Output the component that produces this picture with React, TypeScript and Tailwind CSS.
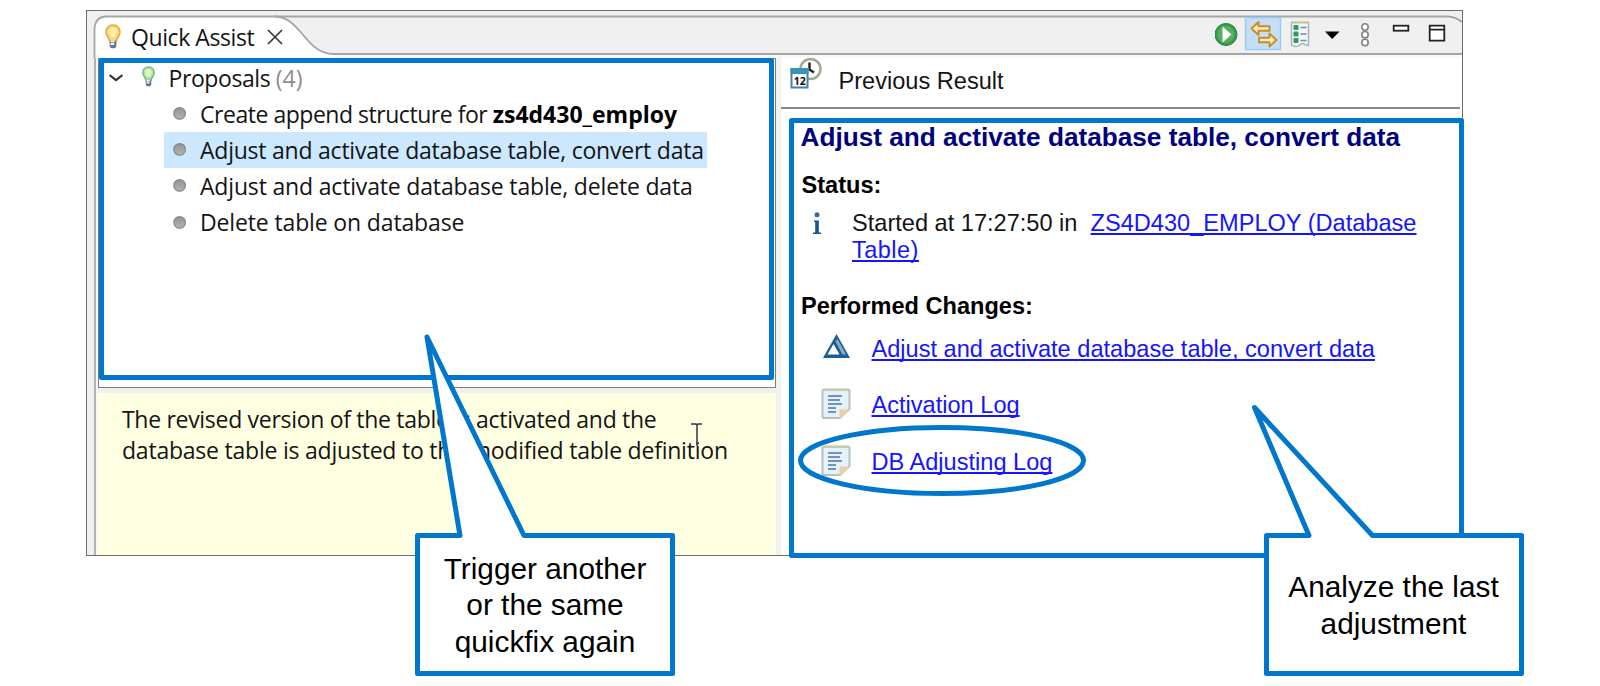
import React from "react";

const BLUE = "#0077cc";

function Bulb({ w, h, rim, fill, shine }: { w: number; h: number; rim: string; fill: string; shine: string }) {
  return (
    <svg width={w} height={h} viewBox="0 0 16 24" preserveAspectRatio="none" className="shrink-0">
      <path d="M8 1C3.900 1 1 3.800 1 7.600c0 2.500 1.200 3.900 2.400 5.600.700 1 1 1.900 1.200 3h6.800c.2-1.100.5-2 1.200-3C13.800 11.500 15 10.100 15 7.600 15 3.800 12.100 1 8 1z" fill={fill} stroke={rim} strokeWidth="1.500" />
      <path d="M8 3.500C5.500 3.500 4 5.300 4 7.500c0 1.800 1.400 3 2 5h4c.6-2 2-3.200 2-5 0-2.200-1.500-4-4-4z" fill={shine} />
      <path d="M4.600 16.200h6.800v4.600c0 1.500-1.500 2.500-3.400 2.500s-3.400-1-3.400-2.500z" fill="#66758a" />
      <path d="M5.500 16.700h4.200M5.500 19.200h3.700" stroke="#edf3fb" strokeWidth="1.800" />
    </svg>
  );
}

function Bullet() {
  return (
    <svg width="14" height="14" viewBox="0 0 14 14" className="shrink-0">
      <defs>
        <linearGradient id="dot" x1="0" y1="0" x2="0" y2="1">
          <stop offset="0" stopColor="#929292" />
          <stop offset="1" stopColor="#b4b4b4" />
        </linearGradient>
      </defs>
      <circle cx="7.600" cy="6.400" r="5.800" fill="url(#dot)" stroke="#8a8a8a" strokeWidth="1.200" />
    </svg>
  );
}

function LogIcon() {
  return (
    <svg width="30" height="32" viewBox="0 0 30 32" className="-mt-[3px] shrink-0">
      <path d="M3 1.500h24a1.500 1.500 0 0 1 1.500 1.500V21L19 30H3a1.500 1.500 0 0 1-1.500-1.500V3A1.500 1.500 0 0 1 3 1.500z" fill="#e4f3fa" stroke="#b3c0c4" strokeWidth="2" />
      <path d="M2.500 2h25" stroke="#cfc8a6" strokeWidth="2" />
      <path d="M19 30.500V22h9.500z" fill="#f1cfa4" stroke="#e6cba6" strokeWidth="1" />
      <path d="M7 8h14M7 12h12M7 16h14M7 20h8M7 24h8" stroke="#7490bd" strokeWidth="1.900" />
    </svg>
  );
}

function Proposal({ children, selected }: { children: React.ReactNode; selected?: boolean }) {
  return (
    <div className="flex h-[36.200px] items-center whitespace-nowrap pl-[65px]">
      <div className={selected ? "flex h-full w-[543px] items-center bg-[#cce8ff] pl-2" : "flex h-full w-[543px] items-center pl-2"}>
        <Bullet />
        <span className="pl-[14px]">{children}</span>
      </div>
    </div>
  );
}

function Header() {
  return (
    <div className="relative flex h-[47px] items-center">
      <svg width="1375" height="47" viewBox="0 0 1375 47" className="absolute left-0 top-0">
        <rect width="1375" height="47" fill="#f0f0f0" />
        <rect x="8" y="43.500" width="1367" height="4" fill="#f8f8f8" />
        <path d="M7 47V16Q9 5.500 19 5.500H190C214 6 223 43 248 43V47z" fill="#fff" />
        <path d="M7.500 47V17Q9 5.500 19 5.500H1361Q1369 6 1375 11" fill="none" stroke="#a6a6a6" strokeWidth="1.800" />
        <path d="M188 5.500C214 6 219 43 246 43H1375" fill="none" stroke="#a6a6a6" strokeWidth="1.800" />
      </svg>
      <div className="relative flex h-[47px] w-full items-start">
        <div className="flex pl-[18px] pt-[13px]">
          <Bulb w={16} h={25} rim="#eda436" fill="#fbd77e" shine="#fff0b4" />
        </div>
        <span className="w-[146px] shrink-0 whitespace-nowrap pl-[10px] pt-[8px] leading-[36px] tracking-[-0.42px]">Quick Assist</span>
        <svg width="16" height="16" viewBox="0 0 16 16" className="mt-[18px] shrink-0">
          <path d="M1 1l14 14M15 1L1 15" stroke="#333" strokeWidth="1.600" />
        </svg>
        <svg width="240" height="36" viewBox="0 0 240 36" className="ml-auto mr-[7px] mt-[5px]">
          <g>
            <circle cx="11" cy="18.500" r="11" fill="#3a9a4c" stroke="#2b8040" strokeWidth="1" />
            <circle cx="11" cy="18.500" r="8.500" fill="#52b060" />
            <path d="M7.500 10.500v16L16.500 18.500z" fill="#fff" />
          </g>
          <rect x="30.500" y="1.500" width="35" height="32" fill="#c4dff5" stroke="#99ccf5" strokeWidth="1.500" />
          <g fill="#ffeebb" stroke="#c98a28" strokeWidth="1.900" strokeLinejoin="round">
            <path d="M36.500 12.500l7-6.500v4.300h11v4.500h-11V19z" />
            <path d="M61.500 24l-7-6.500v4.200h-10.500v4.600h10.500v4.200z" />
          </g>
          <path d="M76.500 6.500h17v23c-3 .5-4-2-6-2s-3 3-6 3-4-1-5-1.500z" fill="#f1f7fc" stroke="#a8b4bd" strokeWidth="1.500" />
          <path d="M76 6.500h18" stroke="#cabf83" strokeWidth="1.600" />
          <g fill="#31995c">
            <rect x="78.500" y="9" width="5" height="5" rx="1" />
            <rect x="78.500" y="15.500" width="5" height="5" rx="1" />
            <rect x="78.500" y="22" width="5" height="5" rx="1" />
          </g>
          <path d="M85.500 11.500h6M85.500 18h6M85.500 24.500h6" stroke="#7389a8" strokeWidth="1.600" />
          <path d="M110 15.500h14.500L117.200 23z" fill="#000" />
          <g fill="#fff" stroke="#858585" strokeWidth="1.600">
            <circle cx="150" cy="11" r="3.200" />
            <circle cx="150" cy="18.700" r="3.200" />
            <circle cx="150" cy="26.500" r="3.200" />
          </g>
          <rect x="178.700" y="9.700" width="14.600" height="5" fill="#fff" stroke="#222" strokeWidth="1.800" />
          <path d="M214.700 9.700h14.600v15h-14.600zM214.700 13.700h14.600" fill="#fff" stroke="#222" strokeWidth="1.800" />
        </svg>
      </div>
    </div>
  );
}

function LeftPane() {
  return (
    <div className="flex w-[678px] flex-col">
      <div className="h-[330px] border border-[#7d7d7d] bg-white">
        <div className="flex h-[37px] items-center">
          <svg width="14" height="8" viewBox="0 0 14 8" className="ml-[10px] mt-[1px]">
            <path d="M0.500 1l6.500 5L13.500 1" fill="none" stroke="#333" strokeWidth="2.200" />
          </svg>
          <div className="-mt-[2px] ml-[19px] flex">
            <Bulb w={13} h={21} rim="#62b183" fill="#b3dfa4" shine="#e4f4bd" />
          </div>
          <span className="ml-[13.500px] pt-[2px] tracking-[-0.420px]">
            Proposals <span className="tracking-[0px] text-[#8d8d8d]">(4)</span>
          </span>
        </div>
        <Proposal>
          <span className="tracking-[-0.470px]">Create append structure for </span>
          <b className="text-black">zs4d430_employ</b>
        </Proposal>
        <Proposal selected>
          <span className="tracking-[-0.230px]">Adjust and activate database table, convert data</span>
        </Proposal>
        <Proposal>
          <span className="tracking-[-0.170px]">Adjust and activate database table, delete data</span>
        </Proposal>
        <Proposal>
          <span className="tracking-[-0.140px]">Delete table on database</span>
        </Proposal>
      </div>
      <div className="mt-[5px] h-[162px] whitespace-nowrap bg-[#ffffe1] pl-[24px] pt-[11px] leading-[31.300px]">
        <span className="tracking-[-0.300px]">The revised version of the table is activated and the</span>
        <br />
        <span className="tracking-[-0.220px]">database table is adjusted to the modified table definition</span>
      </div>
    </div>
  );
}

function Link({ children }: { children: React.ReactNode }) {
  return (
    <a className="text-[#1414ff] underline decoration-[1.500px] underline-offset-[2px] [text-decoration-skip-ink:none]">
      {children}
    </a>
  );
}

function Change({ icon, children }: { icon: React.ReactNode; children: React.ReactNode }) {
  return (
    <div className="flex h-[56.500px] items-center">
      <div className="ml-[40px] w-[50.500px]">{icon}</div>
      <Link>{children}</Link>
    </div>
  );
}

function RightPane() {
  return (
    <div className="flex-1 whitespace-nowrap bg-white font-['Liberation_Sans',Arial,sans-serif] text-[23.580px] tracking-normal">
      <div className="flex h-[49px] items-start">
        <svg width="34" height="32" viewBox="0 0 34 32" className="ml-[8px]">
          <circle cx="21.500" cy="11" r="10" fill="#fff" stroke="#a5a593" strokeWidth="2.400" />
          <path d="M20.500 4.500v7l4.500 3" fill="none" stroke="#222" strokeWidth="2.400" />
          <rect x="2.500" y="11" width="16" height="18.500" fill="#fff" stroke="#4583a0" strokeWidth="2" />
          <rect x="1.500" y="10" width="18" height="6" fill="#3a93b5" />
          <text x="4.800" y="26.500" fontSize="10.500" fontWeight="700" fill="#111" fontFamily="Noto Sans, sans-serif">12</text>
        </svg>
        <span className="ml-[15.500px] pt-[8px] leading-[31px]">Previous Result</span>
      </div>
      <div className="h-[2px] w-[679px] bg-[#8a8a8a]" />
      <div className="flex h-[57px] items-center pl-[19.500px] text-[26.200px] font-bold text-[#000080]">
        Adjust and activate database table, convert data
      </div>
      <div className="flex h-[40px] items-center pl-[20.500px] font-bold text-black">Status:</div>
      <div className="flex h-[83px] items-start pt-[3.500px] leading-[27px]">
        <svg width="8" height="23" viewBox="0 0 8 23" className="ml-[32px] mt-[2px]">
          <circle cx="4" cy="2.700" r="2.500" fill="#2c6fa8" />
          <path d="M1 8.500h4.800V20.500H8V22H0v-1.500h2.200V10H1z" fill="#14568f" />
        </svg>
        <div className="ml-[31px]">
          Started at 17:27:50 in&nbsp; <Link>ZS4D430_EMPLOY (Database</Link>
          <br />
          <Link>
            <span className="tracking-[0.450px]">Table)</span>
          </Link>
        </div>
      </div>
      <div className="flex h-[36px] items-center pl-[20px] font-bold text-black">Performed Changes:</div>
      <div className="-mt-[4px]">
        <Change
          icon={
            <svg width="32" height="26" viewBox="0 0 32 26" className="-mt-[7px]">
              <path d="M15.500 1L29 25H2z" fill="#1d5e94" />
              <path d="M12.500 11l6 10.500h-12z" fill="#fff" />
              <path d="M16.500 6l8.500 15.500h-3.500L14.500 8.500z" fill="#8fa9c4" />
            </svg>
          }
        >
          Adjust and activate database table, convert data
        </Change>
        <Change icon={<LogIcon />}>Activation Log</Change>
        <Change icon={<LogIcon />}>DB Adjusting Log</Change>
      </div>
    </div>
  );
}

function Annotations() {
  return (
    <div className="absolute inset-0 font-['Liberation_Sans',Arial,sans-serif] text-[29.800px] leading-[36.200px] text-black">
      <svg width="1600" height="686" viewBox="0 0 1600 686" className="absolute inset-0" fill="none" stroke={BLUE} strokeWidth="5" strokeLinejoin="round">
        <rect x="101.500" y="60.500" width="670" height="317" />
        <rect x="791.500" y="120.500" width="670" height="435" />
        <ellipse cx="942" cy="460.500" rx="141.500" ry="33" />
        <path d="M417.500 535.500H460L427 337L524 535.500H672.500V673.500H417.500z" fill="#fff" />
        <path d="M1266.500 535.500H1309L1254.500 407.500L1372.500 535.500H1521.500V673.500H1266.500z" fill="#fff" />
      </svg>
      <div className="absolute left-[420px] top-[539px] flex h-[133px] w-[250px] items-center justify-center text-center">
        <span className="whitespace-nowrap">
          Trigger another
          <br />
          or the same
          <br />
          quickfix again
        </span>
      </div>
      <div className="absolute left-[1268.500px] top-[539px] flex h-[133px] w-[250px] items-center justify-center text-center">
        <span className="whitespace-nowrap">
          Analyze the last
          <br />
          adjustment
        </span>
      </div>
    </div>
  );
}

export default function App() {
  return (
    <div className="relative h-[686px] w-[1600px] overflow-hidden bg-white pl-[86px] pt-[10px]">
      <div className="flex h-[546px] w-[1377px] flex-col border border-[#6e6e6e] bg-[#f0f0f0] font-['Open_Sans','Noto_Sans',sans-serif] text-[23px] text-[#141414]">
        <Header />
        <div className="flex min-h-0 flex-1 overflow-hidden">
          <div className="w-[6.500px]" />
          <div className="w-[2px] bg-[#b2b2b2]" />
          <div className="w-[2.500px] bg-[#f8f8f8]" />
          <LeftPane />
          <div className="w-[5px] bg-[#f1f1f1]" />
          <RightPane />
        </div>
      </div>
      <svg width="14" height="34" viewBox="0 0 14 34" className="absolute left-[690px] top-[422px]">
        <path d="M1 2h4.500q1 0 1.500 1 .5-1 1.500-1H12M7 3v21" fill="none" stroke="#333344" strokeWidth="1.500" />
      </svg>
      <Annotations />
    </div>
  );
}
